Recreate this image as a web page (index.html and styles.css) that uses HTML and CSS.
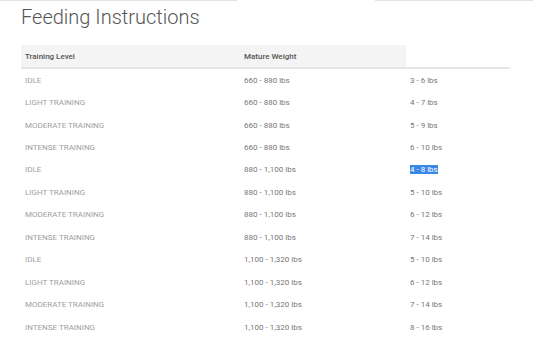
FILE: index.html
```html
<!DOCTYPE html>
<html>
<head>
<meta charset="utf-8">
<link rel="stylesheet" href="styles.css">
</head>
<body>
<div class="topbar"><span class="seg seg-left"></span><span class="seg seg-right"></span></div>
<main class="content">
  <h1 class="title">Feeding Instructions</h1>
  <table class="feed">
    <thead>
      <tr>
        <th class="c1">Training Level</th>
        <th class="c2">Mature Weight</th>
        <th class="c3 blank"></th>
      </tr>
    </thead>
    <tbody>
      <tr><td class="c1">IDLE</td><td class="c2">660 - 880 lbs</td><td class="c3">3 - 6 lbs</td></tr>
      <tr><td class="c1">LIGHT TRAINING</td><td class="c2">660 - 880 lbs</td><td class="c3">4 - 7 lbs</td></tr>
      <tr><td class="c1">MODERATE TRAINING</td><td class="c2">660 - 880 lbs</td><td class="c3">5 - 9 lbs</td></tr>
      <tr><td class="c1">INTENSE TRAINING</td><td class="c2">660 - 880 lbs</td><td class="c3">6 - 10 lbs</td></tr>
      <tr><td class="c1">IDLE</td><td class="c2">880 - 1,100 lbs</td><td class="c3"><span class="selected">4 - 8 lbs</span></td></tr>
      <tr><td class="c1">LIGHT TRAINING</td><td class="c2">880 - 1,100 lbs</td><td class="c3">5 - 10 lbs</td></tr>
      <tr><td class="c1">MODERATE TRAINING</td><td class="c2">880 - 1,100 lbs</td><td class="c3">6 - 12 lbs</td></tr>
      <tr><td class="c1">INTENSE TRAINING</td><td class="c2">880 - 1,100 lbs</td><td class="c3">7 - 14 lbs</td></tr>
      <tr><td class="c1">IDLE</td><td class="c2">1,100 - 1,320 lbs</td><td class="c3">5 - 10 lbs</td></tr>
      <tr><td class="c1">LIGHT TRAINING</td><td class="c2">1,100 - 1,320 lbs</td><td class="c3">6 - 12 lbs</td></tr>
      <tr><td class="c1">MODERATE TRAINING</td><td class="c2">1,100 - 1,320 lbs</td><td class="c3">7 - 14 lbs</td></tr>
      <tr><td class="c1">INTENSE TRAINING</td><td class="c2">1,100 - 1,320 lbs</td><td class="c3">8 - 16 lbs</td></tr>
    </tbody>
  </table>
</main>
</body>
</html>
```
FILE: styles.css
```css
html, body {
  margin: 0;
  padding: 0;
  background: #ffffff;
  font-family: Roboto, "Liberation Sans", sans-serif;
}
.topbar {
  display: flex;
  justify-content: space-between;
  height: 2px;
}
.seg {
  display: block;
  height: 1px;
  background: #e2e2e2;
}
.seg-left { width: 237px; }
.seg-right { width: 158px; }
.content {
  padding: 0 23px 0 21px;
}
.title {
  margin: 3px 0 0 0;
  font-size: 20px;
  line-height: 24px;
  font-weight: 300;
  color: #555555;
}
.feed {
  margin-top: 16px;
  width: 489px;
  border-collapse: collapse;
  table-layout: fixed;
  font-size: 8px;
}
.feed th, .feed td {
  padding: 0 0 0 4px;
  text-align: left;
  white-space: nowrap;
}
.feed th {
  height: 22px;
  background: #f4f4f4;
  color: #555555;
  font-weight: 500;
  border-bottom: 2px solid #e6e6e6;
}
.feed th.blank {
  background: transparent;
}
.feed td {
  height: 22.45px;
  color: #777777;
}
.feed td.c1 {
  color: #a0a0a0;
}
.c1 { width: 215px; }
.c2 { width: 162px; }
.c3 { width: 100px; }
.selected {
  background: #3b87e8;
  color: #ffffff;
}
```
